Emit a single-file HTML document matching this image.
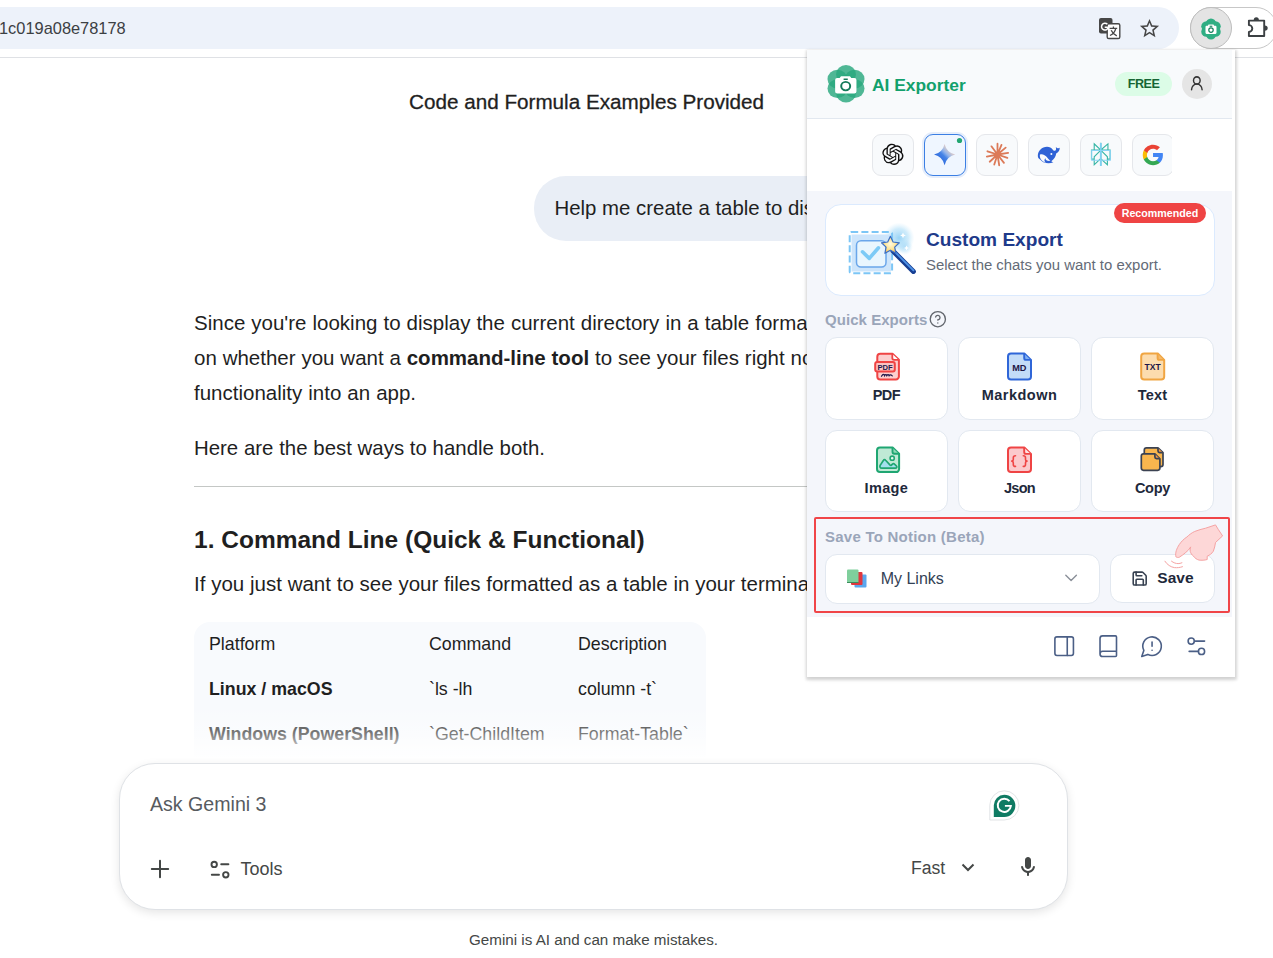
<!DOCTYPE html>
<html lang="en">
<head>
<meta charset="utf-8">
<title>Code and Formula Examples Provided</title>
<style>
*{box-sizing:border-box;margin:0;padding:0}
html,body{width:1273px;height:958px;overflow:hidden;background:#fff}
body{position:relative;font-family:"Liberation Sans",sans-serif;color:#1f1f1f}
.abs{position:absolute;white-space:nowrap}
/* browser toolbar */
#urlbar{position:absolute;left:-40px;top:7px;width:1219px;height:42px;border-radius:21px;background:#edf2fa}
#url{left:-1px;top:18px;font-size:16.4px;line-height:20px;color:#3c4043}
#tbline{position:absolute;left:0;top:57px;width:1273px;height:1px;background:#dfe1e5}
#extpill{position:absolute;left:1190px;top:7px;width:87px;height:42px;border-radius:21px;border:1px solid #c7c7c7;background:#fff}
#extactive{position:absolute;left:1190px;top:7px;width:42px;height:42px;border-radius:21px;background:#e4e4e4;border:1px solid #bdbdbd}
/* page */
.pt{font-size:20.5px;line-height:35px;color:#1f1f1f;word-spacing:.32px}
#title{left:409px;top:86.600px;font-size:20.680px;line-height:30px;color:#1f1f1f;-webkit-text-stroke:.3px #1f1f1f}
#bubble{position:absolute;left:533.500px;top:176px;width:400px;height:64.500px;border-radius:32px 4px 32px 32px;background:#e9eef6}
#hr{position:absolute;left:194px;top:486px;width:700px;height:1px;background:#c4c7c5}
#h2{left:194px;top:522px;font-size:24.5px;line-height:36px;font-weight:700;color:#1f1f1f}
#table{position:absolute;left:194px;top:622px;width:512px;height:140px;border-radius:16px 16px 0 0;background:#f8fafd}
.td{font-size:17.800px;line-height:24px;color:#1f1f1f}
#fade{position:absolute;left:120px;top:700px;width:948px;height:64px;background:linear-gradient(to bottom,rgba(255,255,255,0) 8%,rgba(255,255,255,.42) 53%,rgba(255,255,255,1) 92%)}
#input{position:absolute;left:119.300px;top:763px;width:949.200px;height:146.500px;border-radius:36px;background:#fff;border:1px solid #dfe2e6;box-shadow:0 3px 10px rgba(0,0,0,.10)}
#ph{left:150px;top:792px;font-size:19.6px;line-height:24px;color:#575b5f}
#foot{left:469px;top:930px;font-size:15.2px;line-height:20px;color:#444746}
/* popup */
#popup{position:absolute;left:806.700px;top:50px;width:428.600px;height:627px;background:#fff;box-shadow:0 1px 2.500px 1.500px rgba(0,0,0,.13),0 2px 6px rgba(0,0,0,.08);overflow:hidden}
#phead{position:absolute;left:0;top:0;width:426px;height:70px;background:#f8fafc;border-bottom:1px solid #e2e8f0}
#pmid{position:absolute;left:0;top:141.500px;width:425.700px;height:426px;background:#f4f6fb}
.ib{position:absolute;top:85px;width:42px;height:42px;border-radius:9px;background:#f8fafc;border:1px solid #e5e7eb}
.card{position:absolute;background:#fff;border:1px solid #e2e8f0;border-radius:12px}
.qc{width:122.400px;height:83.500px}
.ql{position:absolute;left:0;width:100%;text-align:center;top:47.400px;font-size:14.500px;line-height:20px;font-weight:700;color:#1e293b}
.sec{font-size:15px;line-height:20px;font-weight:700;color:#9aa5b9}
</style>
</head>
<body>
<!-- toolbar -->
<div id="urlbar"></div>
<div id="url" class="abs">1c019a08e78178</div>
<div id="extpill"></div>
<div id="extactive"></div>
<div id="tbline"></div>
<!-- translate icon -->
<svg class="abs" style="left:1098px;top:17px" width="23" height="23" viewBox="0 0 23 23">
  <rect x="1" y="1" width="13.5" height="15.5" rx="2" fill="#474747"/>
  <rect x="9.2" y="6.7" width="12.6" height="14.8" rx="1.6" fill="#fff" stroke="#474747" stroke-width="1.4"/>
  <path d="M10.6 8.9a3.4 3.4 0 1 0 .9 2.9H7.9" fill="none" stroke="#fff" stroke-width="1.5" transform="translate(-1.2 -1.6)"/>
  <path d="M11.6 11.3h7.6M15.4 9.6v1.7M17.8 11.3c-.6 3-2.7 5.6-5.8 7.2M13.2 13.2c1 2.4 3 4.4 5.6 5.6" fill="none" stroke="#474747" stroke-width="1.3"/>
</svg>
<!-- star -->
<svg class="abs" style="left:1138px;top:16.5px" width="23" height="23" viewBox="0 0 24 24"><path fill="#474747" d="M22 9.24l-7.19-.62L12 2 9.19 8.63 2 9.24l5.46 4.73L5.82 21 12 17.27 18.18 21l-1.63-7.03L22 9.24zM12 15.4l-3.76 2.27 1-4.28-3.32-2.88 4.38-.38L12 6.1l1.71 4.04 4.38.38-3.32 2.88 1 4.28L12 15.4z"/></svg>
<!-- extension active icon -->
<svg class="abs" style="left:1200px;top:17.5px" width="22" height="22" viewBox="0 0 40 40">
  <g fill="#2fae83"><circle cx="20" cy="10.5" r="9.5"/><circle cx="28.2" cy="15.2" r="9.5"/><circle cx="28.2" cy="24.8" r="9.5"/><circle cx="20" cy="29.5" r="9.5"/><circle cx="11.8" cy="24.8" r="9.5"/><circle cx="11.8" cy="15.2" r="9.5"/></g>
  <path d="M15.5 12h9l1.2 2.2H28a2 2 0 0 1 2 2V27a2 2 0 0 1-2 2H12a2 2 0 0 1-2-2V16.200a2 2 0 0 1 2-2h2.300z" fill="#fff"/>
  <circle cx="20" cy="22" r="4" fill="none" stroke="#15805d" stroke-width="2.2"/>
  <rect x="17.6" y="14" width="4.800" height="2" fill="#15805d"/>
</svg>
<!-- puzzle -->
<svg class="abs" style="left:1244px;top:14px" width="29" height="28" viewBox="0 0 29 28"><path d="M4.900 6.600H20.200V22H4.900V17.900A3.400 3.400 0 0 0 4.900 11.100Z" fill="none" stroke="#3c4043" stroke-width="1.900" stroke-linejoin="round"/><path d="M9.700 6.200a2.600 2.900 0 0 1 5.200 0zM20.800 11.500a2.900 2.600 0 0 1 0 5.200z" fill="#3c4043"/></svg>


<!-- page content -->
<div id="title" class="abs">Code and Formula Examples Provided</div>
<div id="bubble"></div>
<div class="abs pt" style="left:554.500px;top:190.500px;font-size:20.400px;word-spacing:0">Help me create a table to display the current directory</div>
<div class="abs pt" style="left:194px;top:304.700px">Since you're looking to display the current directory in a table format, the best approach depends</div>
<div class="abs pt" style="left:194px;top:339.700px;word-spacing:.15px">on whether you want a <b>command-line tool</b> to see your files right now or to build this</div>
<div class="abs pt" style="left:194px;top:374.700px">functionality into an app.</div>
<div class="abs pt" style="left:194px;top:430.700px;font-size:20.400px;word-spacing:.1px">Here are the best ways to handle both.</div>
<div id="hr"></div>
<div id="h2" class="abs">1. Command Line (Quick &amp; Functional)</div>
<div class="abs pt" style="left:194px;top:565.800px;word-spacing:.07px">If you just want to see your files formatted as a table in your terminal, use these commands:</div>
<div id="table"></div>
<div class="abs td" style="left:209px;top:632px">Platform</div>
<div class="abs td" style="left:429px;top:632px">Command</div>
<div class="abs td" style="left:578px;top:632px">Description</div>
<div class="abs td" style="left:209px;top:677px;font-weight:700">Linux / macOS</div>
<div class="abs td" style="left:429px;top:677px">`ls -lh</div>
<div class="abs td" style="left:578px;top:677px">column -t`</div>
<div class="abs td" style="left:209px;top:722px;font-weight:700">Windows (PowerShell)</div>
<div class="abs td" style="left:429px;top:722px">`Get-ChildItem</div>
<div class="abs td" style="left:578px;top:722px">Format-Table`</div>
<div id="fade"></div>
<div id="input"></div>
<div id="ph" class="abs">Ask Gemini 3</div>
<div class="abs" style="left:240.500px;top:857px;font-size:18px;line-height:24px;color:#444746">Tools</div>
<div class="abs" style="left:911px;top:856px;font-size:17.600px;line-height:24px;color:#444746">Fast</div>

<!-- plus -->
<svg class="abs" style="left:148px;top:856.500px" width="24" height="24" viewBox="0 0 24 24"><path d="M12 3.800v16.400M3.800 12h16.400" stroke="#444746" stroke-width="2" stroke-linecap="round" fill="none"/></svg>
<!-- tools icon -->
<svg class="abs" style="left:208px;top:857px" width="24" height="24" viewBox="0 0 24 24" fill="none" stroke="#444746" stroke-width="1.900" stroke-linecap="round"><circle cx="6.200" cy="7.400" r="2.700"/><path d="M13.200 7.200h7.200"/><path d="M3.800 17.800h7.200"/><circle cx="17.800" cy="17.800" r="2.700"/></svg>
<!-- chevron -->
<svg class="abs" style="left:956px;top:856px" width="24" height="24" viewBox="0 0 24 24"><path d="M6.500 8.500l5.500 5.500 5.500-5.500" stroke="#444746" stroke-width="2" fill="none"/></svg>
<!-- mic -->
<svg class="abs" style="left:1016px;top:855.300px" width="24" height="24" viewBox="0 0 24 24"><path fill="#444746" d="M12 14c1.660 0 3-1.340 3-3V5c0-1.660-1.340-3-3-3S9 3.340 9 5v6c0 1.660 1.340 3 3 3zm5.910-3c-.49 0-.9.360-.98.850C16.520 14.200 14.470 16 12 16s-4.520-1.800-4.930-4.150c-.08-.49-.49-.85-.98-.85-.61 0-1.090.540-1 1.140.49 3 2.890 5.350 5.910 5.780V20c0 .55.450 1 1 1s1-.45 1-1v-2.080c3.020-.43 5.420-2.780 5.910-5.780.1-.6-.39-1.140-1-1.140z"/></svg>
<!-- grammarly -->
<svg class="abs" style="left:989px;top:789.500px" width="31" height="31" viewBox="0 0 31 31">
  <path d="M15.300 .8A14.600 14.600 0 0 1 15.300 30H.8V15.300A14.600 14.600 0 0 1 15.300 .8z" fill="#fff" stroke="#d9dde0" stroke-width=".8"/>
  <path d="M15.300 4.800A10.500 10.500 0 0 1 15.300 26.900H4.800V15.300A10.500 10.500 0 0 1 15.300 4.800z" fill="#0f7b63"/>
  <path d="M20.500 11.200a6.600 6.600 0 1 0 1.400 4.700h-6" fill="none" stroke="#fff" stroke-width="1.900"/>
</svg>
<div id="foot" class="abs">Gemini is AI and can make mistakes.</div>

<!-- popup -->
<div id="popup"><div style="position:absolute;left:-.7px;top:-1px;width:429px;height:628px">
  <div id="phead"></div>
  <div class="abs" style="left:66px;top:24px;font-size:17.4px;line-height:24px;font-weight:700;color:#12a06c">AI Exporter</div>
  <div class="abs" style="left:309px;top:23px;width:57px;height:24px;border-radius:12px;background:#dcfce7;color:#166534;font-size:12.600px;letter-spacing:-.5px;font-weight:700;line-height:24px;text-align:center">FREE</div>
  <div class="abs" style="left:376px;top:20px;width:30px;height:30px;border-radius:15px;background:#e5e5e5"></div>
  <div class="ib" style="left:66px"></div>
  <div class="ib" style="left:118px;background:#eff6ff;border:1.400px solid #3b7fe4;box-shadow:0 0 0 2px #e6eefb"></div>
  <div class="ib" style="left:170px"></div>
  <div class="ib" style="left:222px"></div>
  <div class="ib" style="left:274px"></div>
  <div class="ib" style="left:326px"></div>
  <div id="pmid"></div>
  <!-- custom export -->
  <div class="card" style="left:19px;top:155px;width:390px;height:92px;border-radius:16px;border-color:#dbeafe"></div>
  <div class="abs" style="left:120px;top:179px;font-size:19.100px;line-height:24px;font-weight:700;color:#1e3a8a">Custom Export</div>
  <div class="abs" style="left:120px;top:206px;font-size:14.900px;line-height:20px;color:#646b77">Select the chats you want to export.</div>
  <div class="abs" style="left:308px;top:154px;width:92px;height:20px;border-radius:10px;background:#ef4444;color:#fff;font-size:10.7px;font-weight:700;line-height:20px;text-align:center">Recommended</div>
  <div class="abs sec" style="left:19px;top:260.600px;letter-spacing:.05px">Quick Exports</div>
  <!-- grid -->
  <div class="card qc" style="left:19.2px;top:287.5px"><div class="ql" style="letter-spacing:-0.6px">PDF</div></div>
  <div class="card qc" style="left:152.3px;top:287.5px"><div class="ql" style="letter-spacing:0.47px">Markdown</div></div>
  <div class="card qc" style="left:285.3px;top:287.5px"><div class="ql" style="letter-spacing:0.23px">Text</div></div>
  <div class="card qc" style="left:19.2px;top:381.3px;height:82.200px"><div class="ql" style="top:46.400px;letter-spacing:0.37px">Image</div></div>
  <div class="card qc" style="left:152.3px;top:381.3px;height:82.200px"><div class="ql" style="top:46.400px;letter-spacing:-0.7px">Json</div></div>
  <div class="card qc" style="left:285.3px;top:381.3px;height:82.200px"><div class="ql" style="top:46.400px;letter-spacing:-0.3px">Copy</div></div>
  <!-- notion -->
  <div class="abs" style="left:7.900px;top:468.200px;width:416.300px;height:95.500px;border:2.600px solid #f04548;border-radius:2px"></div>
  <div class="abs sec" style="left:19px;top:477.600px;letter-spacing:.24px">Save To Notion (Beta)</div>
  <div class="card" style="left:19px;top:505px;width:275px;height:50px"></div>
  <div class="abs" style="left:74.700px;top:520px;font-size:16px;line-height:20px;color:#334155">My Links</div>
  <div class="card" style="left:304.300px;top:505px;width:104.500px;height:49px"></div>
  <div class="abs" style="left:351.300px;top:519.300px;font-size:15.500px;line-height:20px;font-weight:700;color:#1e293b">Save</div>
<!--POPUP_ICONS_START-->
<svg class="abs" style="left:0;top:0;pointer-events:none" width="429" height="628" viewBox="806 49 429 628" font-family="Liberation Sans, sans-serif">
<defs>
  <linearGradient id="gemg" x1=".2" y1=".8" x2=".8" y2=".2"><stop offset="0" stop-color="#2b66dc"/><stop offset=".42" stop-color="#4583e6"/><stop offset=".6" stop-color="#8fb2ec"/><stop offset=".8" stop-color="#c6c6d4"/><stop offset="1" stop-color="#f6c9c2"/></linearGradient>
  <radialGradient id="spark"><stop offset="0" stop-color="#8ecff5" stop-opacity=".9"/><stop offset=".6" stop-color="#a9dcf8" stop-opacity=".55"/><stop offset="1" stop-color="#c5e8fb" stop-opacity="0"/></radialGradient>
  <linearGradient id="wandg" x1="0" y1="0" x2="1" y2="0"><stop offset="0" stop-color="#173f93"/><stop offset=".5" stop-color="#4f93e6"/><stop offset="1" stop-color="#173f93"/></linearGradient>
  <radialGradient id="starg" cx=".5" cy=".45" r=".6"><stop offset="0" stop-color="#fffbe0"/><stop offset=".6" stop-color="#fde08a"/><stop offset="1" stop-color="#f5a940"/></radialGradient>
</defs>
<!-- logo -->
<g transform="translate(825.100 64.100) scale(1.045 .9875)">
  <g fill="#2aa87e" fill-opacity=".82"><circle cx="20" cy="10.5" r="9.500"/><circle cx="28.200" cy="15.200" r="9.500"/><circle cx="28.200" cy="24.800" r="9.500"/><circle cx="20" cy="29.500" r="9.500"/><circle cx="11.800" cy="24.800" r="9.500"/><circle cx="11.800" cy="15.200" r="9.500"/></g>
  <circle cx="20" cy="20" r="9" fill="#2aa87e"/>
  <path d="M15.200 12.300h8.600l1.300 1.900H28a2 2 0 0 1 2 2V27.800a2 2 0 0 1-2 2H11.600a2 2 0 0 1-2-2V16.200a2 2 0 0 1 2-2h2.300z" fill="#fff"/>
  <circle cx="19.700" cy="22.300" r="4.300" fill="none" stroke="#157a5a" stroke-width="1.900"/>
  <rect x="17.700" y="14.600" width="4" height="1.500" fill="#157a5a"/>
</g>
<!-- user -->
<g transform="translate(1188.900 74.700) scale(.66 .72)" fill="none" stroke="#333" stroke-width="2.200" stroke-linecap="round"><circle cx="12" cy="8" r="5"/><path d="M20 21a8 8 0 0 0-16 0"/></g>
<!-- chatgpt -->
<g transform="translate(882.300 143.700) scale(.885)"><path fill="#111" d="M22.2819 9.8211a5.9847 5.9847 0 0 0-.5157-4.9108 6.0462 6.0462 0 0 0-6.5098-2.9A6.0651 6.0651 0 0 0 4.9807 4.1818a5.9847 5.9847 0 0 0-3.9977 2.9 6.0462 6.0462 0 0 0 .7427 7.0966 5.98 5.98 0 0 0 .511 4.9107 6.051 6.051 0 0 0 6.5146 2.9001A5.9847 5.9847 0 0 0 13.2599 24a6.0557 6.0557 0 0 0 5.7718-4.2058 5.9894 5.9894 0 0 0 3.9977-2.9001 6.0557 6.0557 0 0 0-.7475-7.0729zm-9.022 12.6081a4.4755 4.4755 0 0 1-2.8764-1.0408l.1419-.0804 4.7783-2.7582a.7948.7948 0 0 0 .3927-.6813v-6.7369l2.02 1.1686a.071.071 0 0 1 .038.052v5.5826a4.504 4.504 0 0 1-4.4945 4.4944zm-9.6607-4.1254a4.4708 4.4708 0 0 1-.5346-3.0137l.142.0852 4.783 2.7582a.7712.7712 0 0 0 .7806 0l5.8428-3.3685v2.3324a.0804.0804 0 0 1-.0332.0615L9.74 19.9502a4.4992 4.4992 0 0 1-6.1408-1.6464zM2.3408 7.8956a4.485 4.485 0 0 1 2.3655-1.9728V11.6a.7664.7664 0 0 0 .3879.6765l5.8144 3.3543-2.0201 1.1685a.0757.0757 0 0 1-.071 0l-4.8303-2.7865A4.504 4.504 0 0 1 2.3408 7.872zm16.5963 3.8558L13.1038 8.364 15.1192 7.2a.0757.0757 0 0 1 .071 0l4.8303 2.7913a4.4944 4.4944 0 0 1-.6765 8.1042v-5.6772a.79.79 0 0 0-.407-.667zm2.0107-3.0231l-.142-.0852-4.7735-2.7818a.7759.7759 0 0 0-.7854 0L9.409 9.2297V6.8974a.0662.0662 0 0 1 .0284-.0615l4.8303-2.7866a4.4992 4.4992 0 0 1 6.6802 4.66zM8.3065 12.863l-2.02-1.1638a.0804.0804 0 0 1-.038-.0567V6.0742a4.4992 4.4992 0 0 1 7.3757-3.4537l-.142.0805L8.704 5.459a.7948.7948 0 0 0-.3927.6813zm1.0976-2.3654l2.602-1.4998 2.6069 1.4998v2.9994l-2.5974 1.4997-2.6067-1.4997Z"/></g>
<!-- gemini -->
<g transform="translate(934 144) scale(.883)"><path fill="url(#gemg)" d="M12 0Q14.300 9.700 24 12Q14.300 14.300 12 24Q9.700 14.300 0 12Q9.700 9.700 12 0Z"/></g>
<circle cx="959.500" cy="140.500" r="2.600" fill="#22a672"/>
<!-- claude -->
<g transform="translate(997.500 154.500) scale(.95)" stroke="#dc7a58" stroke-width="1.900" stroke-linecap="round">
  <circle r="2.800" fill="#d97757" stroke="none"/><path d="M0 0L0 -11.300M0 0L4.200 -10.200M0 0L8.600 -7.200M0 0L11.200 -1.800M0 0L10.400 3.600M0 0L6.800 8.800M0 0L1.800 11.300M0 0L-3.400 10.600M0 0L-8.200 7.600M0 0L-11.200 2.200M0 0L-10.600 -3.400M0 0L-6.400 -8.600"/>
</g>
<!-- deepseek -->
<g transform="translate(1036.800 142.600) scale(1.020)">
  <path fill="#2f62d6" d="M1 13C1 8 5 4 10 4c2.600 0 4.300 1 5.300 2.600 1 1.500 2 1.900 3 1.100.8-.7.700-2.500.300-3.500 1.200 1 2.300 2 3.900.9-.1 2.600-1.300 4.700-3.500 5.700-.400 3-1.900 5.800-4.800 7.400.9.600 1.500.900 2.100 1.100-4.100 2-10.200 1.100-12.800-2.400C1.500 15.800 1 14.500 1 13z"/>
  <path fill="#f8fafc" d="M3 11.800c2.200-1 5.300.400 7.400 3 1 1.300 2 2.500 3.100 3-2.700.500-5.300-.500-4.900-2.500-1.900 1.500-1 3.600.600 4.500C5.600 19 2.600 15.800 3 11.800z"/>
  <circle cx="14.300" cy="11.200" r="1" fill="#f8fafc"/>
</g>
<!-- perplexity -->
<g transform="translate(1089.400 142.600) scale(.95 .975)"><path fill="#35b5a5" d="M22.3977 7.0896h-2.3106V.0676l-7.5094 6.3542V.1577h-1.1554v6.1966L4.4904 0v7.0896H1.6023v10.3976h2.8882V24l6.932-6.3591v6.2005h1.1554v-6.0469l6.9318 6.1807v-6.4879h2.8882V7.0896zm-3.4657-4.531v4.531h-5.355l5.355-4.531zm-13.2862.0676 4.8691 4.4634H5.6458V2.6262zM2.7576 16.332V8.245h7.8476l-6.1149 6.1147v1.9723H2.7576zm2.8882 5.0404v-3.8852h.0001v-2.6488l5.7763-5.7764v7.0111l-5.7764 5.2993zm12.7086.0248-5.7766-5.1509V9.0618l5.7766 5.7766v6.5588zm2.8882-5.0652h-1.733v-1.9723L13.3948 8.245h7.8478v8.087z"/></g>
<rect x="1099.900" y="143" width="1.800" height="23" fill="#7fd0f2"/><path d="M1091.700 150.500h18.600v9.700h-18.600z" fill="none" stroke="#8ad4f4" stroke-width="1.100"/>
<!-- google -->
<g transform="translate(1141.800 143.700) scale(.936)">
<path fill="#4285F4" d="M22.56 12.25c0-.78-.07-1.53-.2-2.250H12v4.260h5.920c-.26 1.370-1.040 2.530-2.210 3.310v2.770h3.570c2.080-1.920 3.280-4.740 3.280-8.090z"/>
<path fill="#34A853" d="M12 23c2.970 0 5.460-.98 7.280-2.660l-3.570-2.770c-.98.660-2.230 1.060-3.710 1.060-2.860 0-5.290-1.930-6.160-4.530H2.180v2.840C3.990 20.530 7.700 23 12 23z"/>
<path fill="#FBBC05" d="M5.840 14.090c-.22-.66-.35-1.360-.35-2.090s.13-1.430.35-2.090V7.070H2.180C1.430 8.550 1 10.220 1 12s.43 3.450 1.180 4.930l2.850-2.220.81-.62z"/>
<path fill="#EA4335" d="M12 5.380c1.620 0 3.060.56 4.210 1.640l3.150-3.150C17.450 2.090 14.970 1 12 1 7.700 1 3.990 3.470 2.180 7.070l3.660 2.840c.87-2.600 3.300-4.530 6.160-4.530z"/>
</g>
<!-- cover for clipped google button -->
<rect x="1172" y="128" width="63" height="56" fill="#fff"/>

<!-- custom export illustration -->
<circle cx="899" cy="238" r="15.500" fill="url(#spark)"/><circle cx="905" cy="247" r="8" fill="url(#spark)" opacity=".6"/>
<rect x="851.500" y="234.500" width="39.500" height="37" fill="#cde5fb"/>
<rect x="849.700" y="232.100" width="42.400" height="41.200" rx="1.500" fill="none" stroke="#7cc6f6" stroke-width="2" stroke-dasharray="7 3.200"/>
<rect x="856.500" y="240.800" width="29.500" height="26.300" rx="4.500" fill="#e9f6fe" stroke="#6aa6ea" stroke-width="1.500"/>
<path d="M862.500 251.800l6.800 6.600 9.200-10.600" fill="none" stroke="#7ccaf6" stroke-width="3.600" stroke-linecap="round" stroke-linejoin="round"/>
<path d="M893 251l20.400 20.400" stroke="#173f93" stroke-width="5" stroke-linecap="round"/>
<path d="M893.500 250.500l19.900 19.900" stroke="#4f93e6" stroke-width="1.800" stroke-linecap="round"/>
<path d="M890.400 236.300l2.700 5.700 6.200.800-4.600 4.300 1.200 6.200-5.500-3.100-5.500 3.100 1.200-6.200-4.600-4.300 6.200-.8z" fill="url(#starg)" stroke="#3b6fc4" stroke-width="1.200" stroke-linejoin="round"/>
<path d="M903 232.500l.9 2 2 .9-2 .9-.9 2-.9-2-2-.9 2-.9zM906.500 245.500l.8 1.700 1.700.8-1.700.8-.8 1.700-.8-1.700-1.700-.8 1.700-.8z" fill="#fff"/>

<!-- ? icon -->
<g transform="translate(928.700 310.100) scale(.76)" fill="none" stroke="#63676e" stroke-width="1.800" stroke-linecap="round" stroke-linejoin="round"><circle cx="12" cy="12" r="10"/><path d="M9.090 9a3 3 0 0 1 5.830 1c0 2-3 3-3 3"/><path d="M12 17h.01"/></g>

<!-- PDF -->
<g>
  <path d="M880.300 353.800h12.200l6.400 6v16.600a3 3 0 0 1-3 3h-15.600a3 3 0 0 1-3-3v-19.600a3 3 0 0 1 3-3z" fill="#fccfcf" stroke="#ef4444" stroke-width="2" stroke-linejoin="round"/>
  <path d="M892.300 354v4a1.800 1.800 0 0 0 1.800 1.800h4.500" fill="#fff" stroke="#ef4444" stroke-width="1.800" stroke-linejoin="round"/>
  <rect x="875.200" y="362" width="19.600" height="9.600" rx="2" fill="#fbc3c3" stroke="#ef4444" stroke-width="2"/>
  <text x="885" y="369.800" font-size="7.600" font-weight="700" fill="#221a4d" text-anchor="middle">PDF</text>
  <path d="M881.500 376.300c1.500-2.500 2.600-2.200 3-.6.800-1.400 1.700-1.400 2.300 0 .8-1.400 1.700-1.400 2.300 0 .8-1.200 1.900-1 3.200.2" fill="none" stroke="#221a4d" stroke-width="1.200" stroke-linecap="round"/>
</g>
<!-- MD -->
<g>
  <path d="M1011 353.500h13.300l6.700 6.400v16.500a3 3 0 0 1-3 3h-17a3 3 0 0 1-3-3v-19.900a3 3 0 0 1 3-3z" fill="#c3dcf8" stroke="#2f66d8" stroke-width="2" stroke-linejoin="round"/>
  <path d="M1024.200 353.800v4.200a1.900 1.900 0 0 0 1.900 1.900h4.700" fill="#7fb0f2" stroke="#2f66d8" stroke-width="1.900" stroke-linejoin="round"/>
  <text x="1019.300" y="371" font-size="9.200" font-weight="700" fill="#1e1646" text-anchor="middle">MD</text>
</g>
<!-- TXT -->
<g>
  <path d="M1144.200 353.500h13.600l6.400 6.400v16.500a3 3 0 0 1-3 3h-17a3 3 0 0 1-3-3v-19.900a3 3 0 0 1 3-3z" fill="#fcdcae" stroke="#f0a542" stroke-width="2" stroke-linejoin="round"/>
  <path d="M1157.600 353.800v4.200a1.900 1.900 0 0 0 1.900 1.900h4.500" fill="#f6b968" stroke="#f0a542" stroke-width="1.900" stroke-linejoin="round"/>
  <text x="1152.700" y="370.400" font-size="8.600" font-weight="700" fill="#1e1646" text-anchor="middle">TXT</text>
</g>
<!-- Image -->
<g>
  <path d="M880 447.500h12.600l6.500 6.200v15.400a3 3 0 0 1-3 3H880a3 3 0 0 1-3-3v-18.600a3 3 0 0 1 3-3z" fill="#bfe9d5" stroke="#1fa672" stroke-width="2" stroke-linejoin="round"/>
  <path d="M892.500 447.800v4a1.900 1.900 0 0 0 1.900 1.900h4.500" fill="#8fd8b6" stroke="#1fa672" stroke-width="1.900" stroke-linejoin="round"/>
  <circle cx="892.200" cy="458.200" r="2.100" fill="#e8f8f0" stroke="#1fa672" stroke-width="1.600"/>
  <path d="M881.800 468.200c-1.800 0-2.400-1.900-1.500-3.100l3.200-4.800c.5-.8 1.500-.8 2.100-.1l4.300 4.700c.5.500 1.100.5 1.600.1l1-.9c.6-.5 1.400-.5 2 .1l1.800 1.600c1.100 1 .4 2.400-1 2.400z" fill="#a4e0ee" stroke="#1fa672" stroke-width="1.700" stroke-linejoin="round"/>
</g>
<!-- Json -->
<g>
  <path d="M1011 447.500h13.300l6.700 6.400v15.200a3 3 0 0 1-3 3h-17a3 3 0 0 1-3-3v-18.600a3 3 0 0 1 3-3z" fill="#fbc9cc" stroke="#ef4444" stroke-width="2" stroke-linejoin="round"/>
  <path d="M1024.200 447.800v4.200a1.900 1.900 0 0 0 1.900 1.900h4.700" fill="#fde3e3" stroke="#ef4444" stroke-width="1.900" stroke-linejoin="round"/>
  <path d="M1015.500 455.800c-1.600 0-2.200.7-2.200 2v1.600c0 1-.5 1.500-1.500 1.700 1 .2 1.500.7 1.500 1.700v1.600c0 1.300.6 2 2.200 2M1023.300 455.800c1.600 0 2.200.7 2.200 2v1.600c0 1 .5 1.500 1.500 1.700-1 .2-1.500.7-1.500 1.700v1.600c0 1.300-.6 2-2.200 2" fill="none" stroke="#ef4444" stroke-width="1.600" stroke-linecap="round" stroke-linejoin="round"/>
</g>
<!-- Copy -->
<g stroke="#3b4252" stroke-width="1.700" stroke-linejoin="round" fill="#f9b64e">
  <path d="M1146.500 447.800h11.500l5 4.800v11.900a2.200 2.200 0 0 1-2.200 2.200h-14.300a2.200 2.200 0 0 1-2.200-2.200v-14.500a2.200 2.200 0 0 1 2.200-2.200z"/>
  <path d="M1158 448v3a1.600 1.600 0 0 0 1.600 1.600h3.200" fill="#f39a4a"/>
  <path d="M1143.500 453.800h11.400l5 5v9.300a2.200 2.200 0 0 1-2.200 2.200h-14.200a2.200 2.200 0 0 1-2.200-2.200v-12.100a2.200 2.200 0 0 1 2.200-2.200z"/>
  <path d="M1154.900 454v3.100a1.600 1.600 0 0 0 1.600 1.600h3.200" fill="#f39a4a"/>
</g>

<!-- books -->
<g>
  <rect x="854.500" y="574.500" width="12" height="13" rx="1" fill="#5aa7ee"/>
  <rect x="851" y="572" width="11.500" height="13" rx="1" fill="#e0373f"/>
  <rect x="847" y="569.500" width="11.500" height="13" rx="1" fill="#7fcf9c"/>
  <path d="M847 582.500h11.500" stroke="#3c8d5c" stroke-width="1"/>
</g>
<!-- chevron -->
<path d="M1065.800 575.300l5.300 5.300 5.300-5.300" fill="none" stroke="#8b9099" stroke-width="1.400" stroke-linecap="round" stroke-linejoin="round"/>
<!-- save icon -->
<g transform="translate(1131.060 569.960) scale(.72)" fill="none" stroke="#374151" stroke-width="2.200" stroke-linecap="round" stroke-linejoin="round"><path d="M15.200 3a2 2 0 0 1 1.400.6l3.800 3.800a2 2 0 0 1 .6 1.400V19a2 2 0 0 1-2 2H5a2 2 0 0 1-2-2V5a2 2 0 0 1 2-2z"/><path d="M17 21v-7a1 1 0 0 0-1-1H8a1 1 0 0 0-1 1v7"/><path d="M7 3v4a1 1 0 0 0 1 1h7"/></g>
<!-- hand -->
<path d="M1175.900 556.800c-.9-4 .8-8.300 3.300-12.100 2.200-3.300 4.700-5.800 7.700-7.700 2.400-2.300 4.800-4.200 7.700-5.500 3.500-1.600 7.300-2.300 11-3.300l9.900-3.300 2.700 4.400 4.400 6.600-7.100 6.600c-.5 3-1 6-2.200 8.800-1.400 2.200-3.600 3.800-6.100 4.900v3.300c-2.700.8-5.500.9-8.200.6-2.300-.7-4.200-2-5.500-3.900-1.700-1.300-2.800-3-3.300-4.900-.3-1.500-.1-3 .5-4.400-1.300 2.200-2.900 4-4.900 5.500-1.900 1.700-4.100 3.400-6.600 4.900-1.100.4-2.400.2-3.300-.5z" fill="#fdd7d7" stroke="#f5a3a3" stroke-width="1" stroke-linejoin="round"/>
<path d="M1164.900 561.200c2.300 3.600 6 5.900 9.500 6.400 2.800.3 5.500 0 8.100-.9M1171.500 561.200c2.200 1.700 4.500 2.400 6.600 2.400 1.300 0 2.600-.3 3.800-.8" fill="none" stroke="#f5a3a3" stroke-width="1" stroke-linecap="round"/>

<!-- footer icons -->
<g fill="none" stroke="#4b5f86" stroke-width="1.550" stroke-linecap="round" stroke-linejoin="round">
  <g transform="translate(1051.800 633.800) scale(1.030)"><rect x="3" y="3" width="18" height="18" rx="2"/><path d="M15 3v18"/></g>
  <g transform="translate(1095.900 633.800) scale(1.030)"><path d="M4 19.500v-15A2.500 2.500 0 0 1 6.500 2H19a1 1 0 0 1 1 1v18a1 1 0 0 1-1 1H6.500a1 1 0 0 1 0-5H20"/></g>
  <g transform="translate(1139.700 633.800) scale(1.030)"><path d="M7.900 20A9 9 0 1 0 4 16.100L2 22Z"/><path d="M12 8v4"/><path d="M12 16h.01"/></g>
  <g transform="translate(1184 633.900) scale(1.030)"><path d="M20 7h-9"/><path d="M14 17H5"/><circle cx="17" cy="17" r="3"/><circle cx="7" cy="7" r="3"/></g>
</g>
</svg>
<!--POPUP_ICONS_END-->
</div></div>
</body>
</html>
